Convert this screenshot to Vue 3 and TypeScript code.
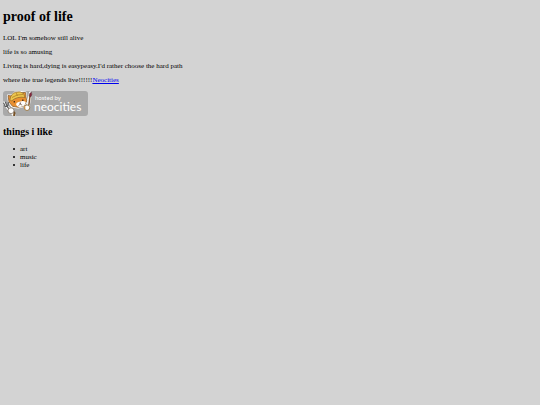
<script setup lang="ts">
const paragraphs: string[] = [
  "LOL I'm somehow still alive",
  'life is so amusing',
  "Living is hard,dying is easypeasy.I'd rather choose the hard path",
]
const likes: string[] = ['art', 'music', 'life']
</script>

<template>
  <main class="page">
    <h1>proof of life</h1>
    <p v-for="line in paragraphs" :key="line">{{ line }}</p>
    <p>where the true legends live!!!!!!<a href="#">Neocities</a></p>

    <svg class="badge" viewBox="0 0 85 25" role="img" aria-label="hosted by neocities">
      <rect width="85" height="25" rx="3" fill="#a9a9a9" />
      <!-- white sticker outline -->
      <g fill="#fff" stroke="#fff" stroke-width="2" stroke-linejoin="round" stroke-linecap="round">
        <path d="M6 11L5 4.500 9 4.500 12 1.500 18 1 22.500 1.500 23 6 24 10 21 15 15 16.500 9 15.500z" />
        <path d="M1 12l3 3.500 4 5 3 3.500M27.500 2L25 16" stroke-width="3" />
      </g>
      <!-- fork -->
      <g fill="none" stroke="#5c5c5c" stroke-width="1.200" stroke-linecap="round" stroke-linejoin="round">
        <path d="M.6 12l1.600 3.500 2.600-.3.600-3.700M2.500 11.300l1.500 4 4 5" />
      </g>
      <!-- cat head -->
      <path d="M6 11L5 4.500 9 5l11-3.500 2.500 0 .5 4.500.8 4-2.800 5-6 1.300-5.500-1z" fill="#e99032" stroke="#795022" stroke-width=".7" stroke-linejoin="round" />
      <path d="M13.500 12q2-1.500 4-1.500 3-1 5.200.5-.4 3.500-3.700 4.600-3 .8-5-.6-1.500-1.200-.5-3z" fill="#fff" />
      <path d="M7 8.500Q7.500 3 12.500 1.300 17.500-.2 20.500 2.500L22 6.500Q14 5 8.500 10z" fill="#edc64d" stroke="#8c652b" stroke-width=".7" />
      <path d="M9 6.500q5-3.500 11-3M13 1.800l1.500 3" fill="none" stroke="#a57720" stroke-width=".7" />
      <path d="M11.300 10v1.600M19.800 8.500v1.500" stroke="#412918" stroke-width="1.300" />
      <path d="M16 12l2.200-.4-.7 1.500z" fill="#4e2c25" />
      <path d="M15.500 14.500l1.700-1.200 2 .7" fill="none" stroke="#6d4a35" stroke-width=".7" />
      <!-- left paw -->
      <path d="M8 18l3.500 4-.5 3" fill="none" stroke="#785328" stroke-width="2" />
      <ellipse cx="8" cy="19.700" rx="3" ry="2.900" fill="#fff" stroke="#746454" stroke-width=".7" />
      <!-- paintbrush -->
      <path d="M27 5l-1.200 9.500" stroke="#84562f" stroke-width="1.500" />
      <path d="M26.200 5q-.2-3 2.300-4 1 2.500-.7 5z" fill="#87243c" stroke="#493338" stroke-width=".5" />
      <!-- right paw -->
      <ellipse cx="24" cy="16.700" rx="2.700" ry="2.800" fill="#fff" stroke="#8c652b" stroke-width=".8" />
      <path d="M21.800 15.500v2.500" stroke="#df9135" stroke-width="1" />
      <text class="badge-small" x="32" y="9">hosted by</text>
      <text class="badge-name" x="31" y="20">neocities</text>
    </svg>

    <h2>things i like</h2>
    <ul>
      <li v-for="item in likes" :key="item">{{ item }}</li>
    </ul>
  </main>
</template>

<style>
body {
  background: #d3d3d3;
}
</style>

<style scoped>
.page {
  display: flow-root;
  padding: 0 3px;
  color: #000;
  font-family: "Liberation Serif", "Times New Roman", serif;
  font-size: 7px;
  line-height: 8px;
}

h1 {
  margin: 9px 0;
  font-size: 14px;
  line-height: 16px;
}

p {
  margin: 6px 0;
}

a {
  color: #0000ee;
}

.badge {
  display: block;
  width: 85px;
  height: 25px;
  margin: 7px 0 10px;
}

.badge-small,
.badge-name {
  fill: #fff;
  font-family: Lato, "Open Sans", sans-serif;
}

.badge-small {
  font-size: 6px;
}

.badge-name {
  font-size: 12px;
}

h2 {
  margin: 10px 0 7px;
  font-size: 10px;
  line-height: 12px;
}

ul {
  margin: 7px 0;
  padding-left: 10px;
  list-style: none;
}

li {
  display: flex;
  align-items: center;
  gap: 5px;
}

li::before {
  width: 2px;
  height: 2px;
  border-radius: 50%;
  background: currentColor;
  content: "";
}
</style>
